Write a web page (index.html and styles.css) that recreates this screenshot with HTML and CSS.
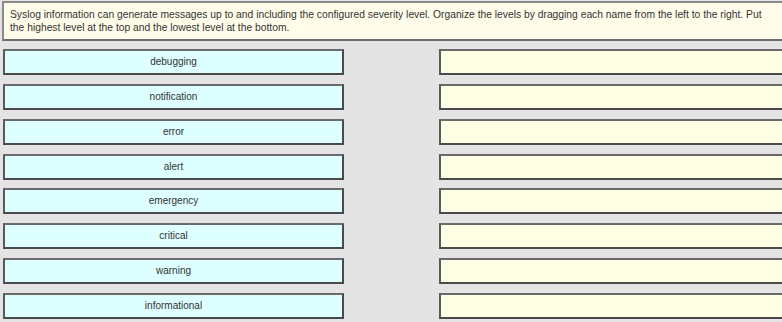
FILE: index.html
```html
<!DOCTYPE html>
<html lang="en">
<head>
    <meta charset="UTF-8">
    <title>Syslog Severity Levels</title>
    <link rel="stylesheet" href="styles.css">
</head>
<body>
    <!-- Question text -->
    <div class="prompt">
        Syslog information can generate messages up to and including the configured severity level. Organize the levels by dragging each name from the left to the right. Put the highest level at the top and the lowest level at the bottom.
    </div>

    <!-- Drag source and drop targets -->
    <div class="board">
        <div class="sources">
            <div class="item">debugging</div>
            <div class="item">notification</div>
            <div class="item">error</div>
            <div class="item">alert</div>
            <div class="item">emergency</div>
            <div class="item">critical</div>
            <div class="item">warning</div>
            <div class="item">informational</div>
        </div>
        <div class="targets">
            <div class="slot"></div>
            <div class="slot"></div>
            <div class="slot"></div>
            <div class="slot"></div>
            <div class="slot"></div>
            <div class="slot"></div>
            <div class="slot"></div>
            <div class="slot"></div>
        </div>
    </div>
</body>
</html>
```

FILE: styles.css
```css
body {
    margin: 0;
    padding: 0;
    background-color: #e4e4e4;
    font-family: "Liberation Sans", Arial, sans-serif;
    color: #333;
    overflow: hidden;
    width: 782px;
    height: 322px;
}
.prompt {
    margin: 1px -20px 0 2px;
    height: 31px;
    padding: 5px 24px 0 6px;
    background-color: #fffdea;
    border: 2px solid #8a8a8a;
    border-bottom-color: #6e6e6e;
    border-right: none;
    font-size: 10.3px;
    line-height: 13px;
}
.board {
    display: flex;
    gap: 95px;
    padding: 8px 0 0 3px;
}
.sources, .targets {
    display: flex;
    flex-direction: column;
    flex-shrink: 0;
    gap: 8.86px;
}
.sources {
    width: 341px;
}
.targets {
    width: 360px;
}
.item, .slot {
    box-sizing: border-box;
    height: 26px;
    border: 2px solid #4a4a4a;
    border-top-color: #6a6a6a;
    border-left-color: #5a5a5a;
}
.item {
    background-color: #ddffff;
    font-size: 10px;
    line-height: 22px;
    text-align: center;
}
.slot {
    background-color: #ffffe6;
    border-right: none;
}
```
